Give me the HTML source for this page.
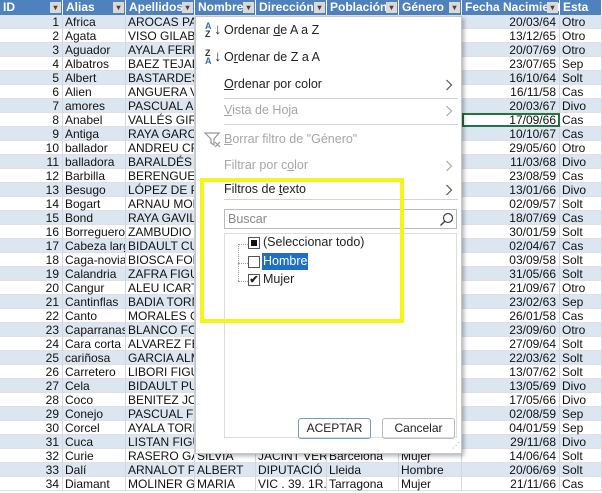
<!DOCTYPE html>
<html><head><meta charset="utf-8"><style>
*{margin:0;padding:0;box-sizing:border-box}
body{width:602px;height:493px;overflow:hidden;background:#fff;font-family:"Liberation Sans",Arial,sans-serif;font-size:12px;color:#111;position:relative}
.hdr{position:absolute;left:0;top:0;width:602px;height:15px;background:#fff;display:flex}
.hdr div{height:15px;background:#4f81bd;color:#fff;font-weight:bold;font-size:12px;line-height:15px;padding-left:3px;position:relative;border-right:1px solid #fff;overflow:hidden;white-space:nowrap}
.hdr div b{position:absolute;right:1px;top:2px;width:11px;height:11px;background:#d9d9d9;color:#444;font-size:8px;line-height:11px;text-align:center}
.r{position:absolute;left:0;width:602px;height:14px;display:flex;line-height:14px;border-bottom:1px solid #e0e0e0}
.r.b{background:#dce6f1}
.r span{overflow:hidden;white-space:nowrap;padding-left:2px;border-right:1px solid #d0d7e5;height:14px}
.c0{width:63px;text-align:right;padding-right:3px}
.c1{width:63px}.c2{width:69px}.c3{width:61px}.c4{width:71px}.c5{width:72px}.c6{width:63px}
.c7{width:98px;text-align:right;padding-right:3px}.c8{width:42px}
.menu{position:absolute;left:195px;top:16px;width:267px;height:438px;background:#fff;border:1px solid #c6c6c6;box-shadow:2px 2px 4px rgba(0,0,0,.3);font-size:12.5px;color:#222}
.mi{position:absolute;left:28px;white-space:nowrap}
.g{color:#a6a6a6}
.arr{position:absolute;left:249px;width:8px;height:12px}
.sep{position:absolute;left:28px;width:234px;height:1px;background:#d4d4d4}
</style></head><body>
<div class="hdr">
<div style="width:63px">ID<b>▾</b></div><div style="width:63px">Alias<b>▾</b></div><div style="width:69px">Apellidos<b>▾</b></div><div style="width:61px">Nombre<b>▾</b></div><div style="width:71px">Dirección<b>▾</b></div><div style="width:72px">Población<b>▾</b></div><div style="width:63px">Género<b>▾</b></div><div style="width:98px">Fecha Nacimiento<b>▾</b></div><div style="width:42px">Esta</div>
</div>
<div class="r b" style="top:15px"><span class="c0">1</span><span class="c1">Africa</span><span class="c2">AROCAS PAS</span><span class="c3"></span><span class="c4"></span><span class="c5"></span><span class="c6"></span><span class="c7">20/03/64</span><span class="c8">Otro</span></div>
<div class="r" style="top:29px"><span class="c0">2</span><span class="c1">Agata</span><span class="c2">VISO GILABE</span><span class="c3"></span><span class="c4"></span><span class="c5"></span><span class="c6"></span><span class="c7">13/12/65</span><span class="c8">Otro</span></div>
<div class="r b" style="top:43px"><span class="c0">3</span><span class="c1">Aguador</span><span class="c2">AYALA FERR</span><span class="c3"></span><span class="c4"></span><span class="c5"></span><span class="c6"></span><span class="c7">20/07/69</span><span class="c8">Otro</span></div>
<div class="r" style="top:57px"><span class="c0">4</span><span class="c1">Albatros</span><span class="c2">BAEZ TEJADO</span><span class="c3"></span><span class="c4"></span><span class="c5"></span><span class="c6"></span><span class="c7">23/07/65</span><span class="c8">Sep</span></div>
<div class="r b" style="top:71px"><span class="c0">5</span><span class="c1">Albert</span><span class="c2">BASTARDES</span><span class="c3"></span><span class="c4"></span><span class="c5"></span><span class="c6"></span><span class="c7">16/10/64</span><span class="c8">Solt</span></div>
<div class="r" style="top:85px"><span class="c0">6</span><span class="c1">Alien</span><span class="c2">ANGUERA VI</span><span class="c3"></span><span class="c4"></span><span class="c5"></span><span class="c6"></span><span class="c7">16/11/58</span><span class="c8">Cas</span></div>
<div class="r b" style="top:99px"><span class="c0">7</span><span class="c1">amores</span><span class="c2">PASCUAL AL</span><span class="c3"></span><span class="c4"></span><span class="c5"></span><span class="c6"></span><span class="c7">20/03/67</span><span class="c8">Divo</span></div>
<div class="r" style="top:113px"><span class="c0">8</span><span class="c1">Anabel</span><span class="c2">VALLÉS GIRV</span><span class="c3"></span><span class="c4"></span><span class="c5"></span><span class="c6"></span><span class="c7" style="outline:2px solid #217346;outline-offset:-2px">17/09/66</span><span class="c8">Cas</span></div>
<div class="r b" style="top:127px"><span class="c0">9</span><span class="c1">Antiga</span><span class="c2">RAYA GARC</span><span class="c3"></span><span class="c4"></span><span class="c5"></span><span class="c6"></span><span class="c7">10/10/67</span><span class="c8">Cas</span></div>
<div class="r" style="top:141px"><span class="c0">10</span><span class="c1">ballador</span><span class="c2">ANDREU CRU</span><span class="c3"></span><span class="c4"></span><span class="c5"></span><span class="c6"></span><span class="c7">29/05/60</span><span class="c8">Otro</span></div>
<div class="r b" style="top:155px"><span class="c0">11</span><span class="c1">balladora</span><span class="c2">BARALDÉS C</span><span class="c3"></span><span class="c4"></span><span class="c5"></span><span class="c6"></span><span class="c7">11/03/68</span><span class="c8">Divo</span></div>
<div class="r" style="top:169px"><span class="c0">12</span><span class="c1">Barbilla</span><span class="c2">BERENGUERA</span><span class="c3"></span><span class="c4"></span><span class="c5"></span><span class="c6"></span><span class="c7">23/08/59</span><span class="c8">Cas</span></div>
<div class="r b" style="top:183px"><span class="c0">13</span><span class="c1">Besugo</span><span class="c2">LÓPEZ DE PA</span><span class="c3"></span><span class="c4"></span><span class="c5"></span><span class="c6"></span><span class="c7">13/01/66</span><span class="c8">Divo</span></div>
<div class="r" style="top:197px"><span class="c0">14</span><span class="c1">Bogart</span><span class="c2">ARNAU MORI</span><span class="c3"></span><span class="c4"></span><span class="c5"></span><span class="c6"></span><span class="c7">02/09/57</span><span class="c8">Solt</span></div>
<div class="r b" style="top:211px"><span class="c0">15</span><span class="c1">Bond</span><span class="c2">RAYA GAVIL</span><span class="c3"></span><span class="c4"></span><span class="c5"></span><span class="c6"></span><span class="c7">18/07/69</span><span class="c8">Cas</span></div>
<div class="r" style="top:225px"><span class="c0">16</span><span class="c1">Borreguero</span><span class="c2">ZAMBUDIO FI</span><span class="c3"></span><span class="c4"></span><span class="c5"></span><span class="c6"></span><span class="c7">30/01/59</span><span class="c8">Solt</span></div>
<div class="r b" style="top:239px"><span class="c0">17</span><span class="c1">Cabeza larg</span><span class="c2">BIDAULT CUL</span><span class="c3"></span><span class="c4"></span><span class="c5"></span><span class="c6"></span><span class="c7">02/04/67</span><span class="c8">Cas</span></div>
<div class="r" style="top:253px"><span class="c0">18</span><span class="c1">Caga-novias</span><span class="c2">BIOSCA FONT</span><span class="c3"></span><span class="c4"></span><span class="c5"></span><span class="c6"></span><span class="c7">03/09/58</span><span class="c8">Solt</span></div>
<div class="r b" style="top:267px"><span class="c0">19</span><span class="c1">Calandria</span><span class="c2">ZAFRA FIGUL</span><span class="c3"></span><span class="c4"></span><span class="c5"></span><span class="c6"></span><span class="c7">31/05/66</span><span class="c8">Solt</span></div>
<div class="r" style="top:281px"><span class="c0">20</span><span class="c1">Cangur</span><span class="c2">ALEU ICART</span><span class="c3"></span><span class="c4"></span><span class="c5"></span><span class="c6"></span><span class="c7">21/09/67</span><span class="c8">Otro</span></div>
<div class="r b" style="top:295px"><span class="c0">21</span><span class="c1">Cantinflas</span><span class="c2">BADIA TORNI</span><span class="c3"></span><span class="c4"></span><span class="c5"></span><span class="c6"></span><span class="c7">23/02/63</span><span class="c8">Sep</span></div>
<div class="r" style="top:309px"><span class="c0">22</span><span class="c1">Canto</span><span class="c2">MORALES GE</span><span class="c3"></span><span class="c4"></span><span class="c5"></span><span class="c6"></span><span class="c7">26/01/58</span><span class="c8">Cas</span></div>
<div class="r b" style="top:323px"><span class="c0">23</span><span class="c1">Caparranas</span><span class="c2">BLANCO FON</span><span class="c3"></span><span class="c4"></span><span class="c5"></span><span class="c6"></span><span class="c7">23/09/60</span><span class="c8">Otro</span></div>
<div class="r" style="top:337px"><span class="c0">24</span><span class="c1">Cara corta</span><span class="c2">ALVAREZ FE</span><span class="c3"></span><span class="c4"></span><span class="c5"></span><span class="c6"></span><span class="c7">27/09/64</span><span class="c8">Solt</span></div>
<div class="r b" style="top:351px"><span class="c0">25</span><span class="c1">cariñosa</span><span class="c2">GARCIA ALM</span><span class="c3"></span><span class="c4"></span><span class="c5"></span><span class="c6"></span><span class="c7">22/03/62</span><span class="c8">Solt</span></div>
<div class="r" style="top:365px"><span class="c0">26</span><span class="c1">Carretero</span><span class="c2">LIBORI FIGUE</span><span class="c3"></span><span class="c4"></span><span class="c5"></span><span class="c6"></span><span class="c7">13/07/62</span><span class="c8">Solt</span></div>
<div class="r b" style="top:379px"><span class="c0">27</span><span class="c1">Cela</span><span class="c2">BIDAULT PUE</span><span class="c3"></span><span class="c4"></span><span class="c5"></span><span class="c6"></span><span class="c7">13/05/69</span><span class="c8">Divo</span></div>
<div class="r" style="top:393px"><span class="c0">28</span><span class="c1">Coco</span><span class="c2">BENITEZ JOS</span><span class="c3"></span><span class="c4"></span><span class="c5"></span><span class="c6"></span><span class="c7">17/05/66</span><span class="c8">Divo</span></div>
<div class="r b" style="top:407px"><span class="c0">29</span><span class="c1">Conejo</span><span class="c2">PASCUAL FL</span><span class="c3"></span><span class="c4"></span><span class="c5"></span><span class="c6"></span><span class="c7">02/08/59</span><span class="c8">Sep</span></div>
<div class="r" style="top:421px"><span class="c0">30</span><span class="c1">Corcel</span><span class="c2">AYALA TORN</span><span class="c3"></span><span class="c4"></span><span class="c5"></span><span class="c6"></span><span class="c7">04/01/59</span><span class="c8">Sep</span></div>
<div class="r b" style="top:435px"><span class="c0">31</span><span class="c1">Cuca</span><span class="c2">LISTAN FIGUE</span><span class="c3"></span><span class="c4"></span><span class="c5"></span><span class="c6"></span><span class="c7">29/11/68</span><span class="c8">Divo</span></div>
<div class="r" style="top:449px"><span class="c0">32</span><span class="c1">Curie</span><span class="c2">RASERO GAV</span><span class="c3">SILVIA</span><span class="c4">JACINT VERD</span><span class="c5">Barcelona</span><span class="c6">Mujer</span><span class="c7">14/06/64</span><span class="c8">Solt</span></div>
<div class="r b" style="top:463px"><span class="c0">33</span><span class="c1">Dalí</span><span class="c2">ARNALOT PU</span><span class="c3">ALBERT</span><span class="c4">DIPUTACIÓ , 1</span><span class="c5">Lleida</span><span class="c6">Hombre</span><span class="c7">20/06/69</span><span class="c8">Solt</span></div>
<div class="r" style="top:477px"><span class="c0">34</span><span class="c1">Diamant</span><span class="c2">MOLINER GAF</span><span class="c3">MARIA</span><span class="c4">VIC . 39. 1R..</span><span class="c5">Tarragona</span><span class="c6">Mujer</span><span class="c7">21/11/66</span><span class="c8">Cas</span></div>

<div class="menu">
 <div style="position:absolute;left:9px;top:5px;font-size:9px;line-height:8px;color:#2f6fb6;font-weight:bold">A<br><span style="color:#333">Z</span></div>
 <div style="position:absolute;left:18px;top:4px;font-size:15px;color:#333">↓</div>
 <div class="mi" style="top:6px">Ordenar <u>d</u>e A a Z</div>
 <div style="position:absolute;left:9px;top:32px;font-size:9px;line-height:8px;color:#333;font-weight:bold">Z<br><span style="color:#2f6fb6">A</span></div>
 <div style="position:absolute;left:18px;top:31px;font-size:15px;color:#333">↓</div>
 <div class="mi" style="top:33px">O<u>r</u>denar de Z a A</div>
 <div class="mi" style="top:60px"><u>O</u>rdenar por color</div>
 <svg class="arr" style="top:62px" viewBox="0 0 8 12"><path d="M1.5 1l5 5-5 5" fill="none" stroke="#555" stroke-width="1.2"/></svg>
 <div class="sep" style="top:81px"></div>
 <div class="mi g" style="top:86px"><u>V</u>ista de Hoja</div>
 <svg class="arr" style="top:88px" viewBox="0 0 8 12"><path d="M1.5 1l5 5-5 5" fill="none" stroke="#aaa" stroke-width="1.2"/></svg>
 <div class="sep" style="top:107px"></div>
 <svg style="position:absolute;left:8px;top:114px" width="18" height="18" viewBox="0 0 18 18"><path d="M1 2h14l-5 6v6l-3-2V8z" fill="none" stroke="#999" stroke-width="1.2"/><path d="M11 11l5 5M16 11l-5 5" stroke="#999" stroke-width="1.2"/></svg>
 <div class="mi g" style="top:115px"><u>B</u>orrar filtro de "Género"</div>
 <div class="mi g" style="top:141px">Filtrar por c<u>o</u>lor</div>
 <svg class="arr" style="top:143px" viewBox="0 0 8 12"><path d="M1.5 1l5 5-5 5" fill="none" stroke="#aaa" stroke-width="1.2"/></svg>
 <div class="mi" style="top:165px">Filtros de <u>t</u>exto</div>
 <svg class="arr" style="top:167px" viewBox="0 0 8 12"><path d="M1.5 1l5 5-5 5" fill="none" stroke="#555" stroke-width="1.2"/></svg>
 <div class="sep" style="top:182px"></div>
 <div style="position:absolute;left:28px;top:192px;width:233px;height:20px;border:1px solid #bbb;color:#888;padding-left:3px;line-height:18px">Buscar
  <svg style="position:absolute;right:2px;top:2px" width="15" height="15" viewBox="0 0 15 15"><circle cx="9" cy="6" r="4.5" fill="none" stroke="#444" stroke-width="1.2"/><path d="M5.8 9.2L1.5 13.5" stroke="#444" stroke-width="1.4"/></svg></div>
 <div style="position:absolute;left:28px;top:216px;width:233px;height:205px;border:1px solid #ddd"></div>
 <div style="position:absolute;left:42px;top:227px;width:1px;height:37px;border-left:1px dotted #999"></div>
 <div style="position:absolute;left:42px;top:227px;width:10px;border-top:1px dotted #999"></div>
 <div style="position:absolute;left:42px;top:246px;width:10px;border-top:1px dotted #999"></div>
 <div style="position:absolute;left:42px;top:264px;width:10px;border-top:1px dotted #999"></div>
 <div style="position:absolute;left:52px;top:220px;width:12px;height:12px;border:1px solid #555;background:#fff"><div style="margin:2px;width:6px;height:6px;background:#111"></div></div>
 <div class="mi" style="left:67px;top:218px">(Seleccionar todo)</div>
 <div style="position:absolute;left:52px;top:239px;width:12px;height:12px;border:1px solid #555;background:#fff"></div>
 <div class="mi" style="left:66px;top:236px;background:#1f6fc4;color:#fff;padding:0 1px;height:17px;line-height:17px">Hombre</div>
 <div style="position:absolute;left:52px;top:257px;width:12px;height:12px;border:1px solid #555;background:#fff;font-size:11px;line-height:10px;text-align:center;font-weight:bold">✔</div>
 <div class="mi" style="left:67px;top:255px">Mujer</div>
 <div style="position:absolute;left:102px;top:401px;width:73px;height:21px;border:1px solid #6a9fd0;border-radius:3px;text-align:center;line-height:19px;font-size:12px">ACEPTAR</div>
 <div style="position:absolute;left:186px;top:401px;width:73px;height:21px;border:1px solid #bbb;border-radius:3px;text-align:center;line-height:19px;font-size:12px">Cancelar</div>
 <div style="position:absolute;left:256px;top:424px;font-size:8px;color:#aaa">⋰</div>
</div>
<div style="position:absolute;left:200px;top:178px;width:204px;height:145px;border:4px solid #f5f51e"></div>
</body></html>
